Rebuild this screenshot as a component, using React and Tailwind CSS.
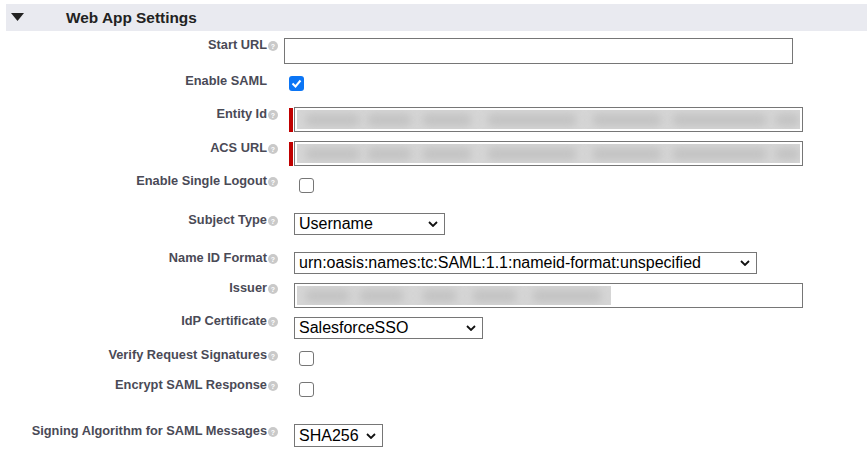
import React from "react";

const Help = () => (
  <span className="ml-[1px] mt-[4px] flex size-[10px] shrink-0 items-center justify-center rounded-full bg-[#c9c9c9] text-[7px] font-bold leading-none text-white">
    ?
  </span>
);

const Chevron = () => (
  <svg width="10" height="6" viewBox="0 0 10 6" className="shrink-0">
    <path d="M1 1l4 4 4-4" fill="none" stroke="#111" strokeWidth="1.8" />
  </svg>
);

const Select = ({ value, width, height = "h-[22px]" }) => (
  <div
    className={`flex ${width} ${height} items-center justify-between border border-[#767676] bg-white pl-[4px] pr-[6px] text-[16px] leading-none text-black`}
  >
    <span className="whitespace-nowrap">{value}</span>
    <Chevron />
  </div>
);

const Checkbox = ({ checked }) =>
  checked ? (
    <div className="flex size-[15px] items-center justify-center rounded-[3px] bg-[#0b75f5]">
      <svg width="11" height="9" viewBox="0 0 11 9">
        <path d="M1.5 4.5l3 3 5-6" fill="none" stroke="white" strokeWidth="2" />
      </svg>
    </div>
  ) : (
    <div className="size-[15px] rounded-[3px] border border-[#767676] bg-white" />
  );

// blurred redacted value inside an input
const Redacted = ({ width, spots }) => (
  <div className={`relative h-full ${width} overflow-hidden bg-[#d6d6d6]`}>
    {spots.map(([l, w], i) => (
      <span
        key={i}
        className="absolute top-[4px] h-[12px] rounded-full bg-[#c2c2c2] blur-[4px]"
        style={{ left: l, width: w }}
      />
    ))}
  </div>
);

const Row = ({ label, h, lpt, cpt, help = true, children }) => (
  <div className={`flex ${h}`}>
    <div className={`flex w-[278px] shrink-0 items-start justify-end ${lpt}`}>
      <span className="text-[12.8px] font-bold leading-[16px] text-[#4a4a56]">{label}</span>
      {help ? <Help /> : <span className="w-[11px]" />}
    </div>
    <div className={`flex items-start ${cpt}`}>{children}</div>
  </div>
);

const longSpots = [
  [8, 55], [70, 45], [125, 50], [190, 90], [295, 70], [375, 95], [478, 25],
];

export default function App() {
  return (
    <div className="h-[471px] w-[867px] overflow-hidden bg-white font-['Liberation_Sans',Arial,sans-serif]">
      <div className="ml-[6px] mt-[4px] flex h-[27px] items-center bg-[#e9eaf0]">
        <svg width="13" height="8" viewBox="0 0 13 8" className="ml-[5px] mt-[-2px]">
          <path d="M0 0h13L6.5 8z" fill="#222" />
        </svg>
        <span className="ml-[42px] text-[15.4px] font-bold text-[#222]">Web App Settings</span>
      </div>

      <Row label="Start URL" h="h-[39px]" lpt="pt-[6px]" cpt="pt-[7px]">
        <div className="ml-[6px] h-[26px] w-[509px] border border-[#767676] bg-white" />
      </Row>

      <Row label="Enable SAML" help={false} h="h-[34px]" lpt="pt-[3px]" cpt="pt-[6px]">
        <div className="ml-[11px]"><Checkbox checked /></div>
      </Row>

      <Row label="Entity Id" h="h-[35px]" lpt="pt-[2px]" cpt="pt-[3px]">
        <div className="ml-[11px] mt-[1px] h-[24px] w-[4px] bg-[#c00000]" />
        <div className="ml-[1px] h-[25px] w-[509px] border border-[#767676] bg-white p-[2px]">
          <Redacted width="w-full" spots={longSpots} />
        </div>
      </Row>

      <Row label="ACS URL" h="h-[34px]" lpt="pt-[1px]" cpt="pt-[2px]">
        <div className="ml-[11px] mt-[1px] h-[24px] w-[4px] bg-[#c00000]" />
        <div className="ml-[1px] h-[25px] w-[509px] border border-[#767676] bg-white p-[2px]">
          <Redacted width="w-full" spots={longSpots} />
        </div>
      </Row>

      <Row label="Enable Single Logout" h="h-[35px]" lpt="pt-[0px]" cpt="pt-[5px]">
        <div className="ml-[21px]"><Checkbox /></div>
      </Row>

      <Row label="Subject Type" h="h-[40px]" lpt="pt-[4px]" cpt="pt-[5px]">
        <div className="ml-[16px]"><Select value="Username" width="w-[151px]" /></div>
      </Row>

      <Row label="Name ID Format" h="h-[32px]" lpt="pt-[2px]" cpt="pt-[4px]">
        <div className="ml-[16px]">
          <Select value="urn:oasis:names:tc:SAML:1.1:nameid-format:unspecified" width="w-[463px]" />
        </div>
      </Row>

      <Row label="Issuer" h="h-[33px]" lpt="pt-[0px]" cpt="pt-[3px]">
        <div className="ml-[16px] h-[25px] w-[509px] border border-[#767676] bg-white p-[2px]">
          <Redacted width="w-[314px]" spots={[[8, 45], [62, 45], [125, 35], [175, 45], [235, 70]]} />
        </div>
      </Row>

      <Row label="IdP Certificate" h="h-[32px]" lpt="pt-[0px]" cpt="pt-[4px]">
        <div className="ml-[16px]"><Select value="SalesforceSSO" width="w-[189px]" /></div>
      </Row>

      <Row label="Verify Request Signatures" h="h-[32px]" lpt="pt-[2px]" cpt="pt-[6px]">
        <div className="ml-[21px]"><Checkbox /></div>
      </Row>

      <Row label="Encrypt SAML Response" h="h-[33px]" lpt="pt-[0px]" cpt="pt-[5px]">
        <div className="ml-[21px]"><Checkbox /></div>
      </Row>

      <Row label="Signing Algorithm for SAML Messages" h="h-[61px]" lpt="pt-[13px]" cpt="pt-[14px]">
        <div className="ml-[16px]"><Select value="SHA256" width="w-[89px]" height="h-[23px]" /></div>
      </Row>
    </div>
  );
}
